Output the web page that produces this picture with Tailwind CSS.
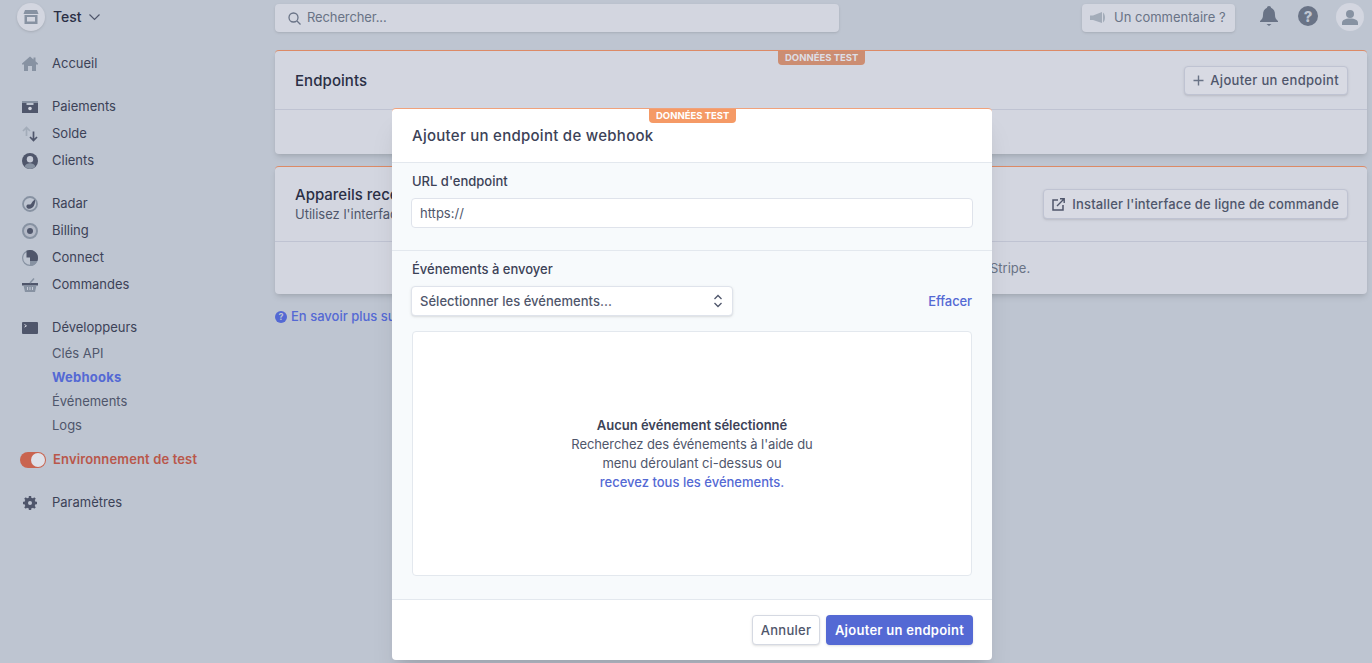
<!DOCTYPE html>
<html>
<head>
    <meta charset="UTF-8">
    <title>Webhooks - Stripe</title>
    <script src="https://cdn.jsdelivr.net/npm/@tailwindcss/browser@4"></script>
</head>
<body class="relative h-[663px] w-[1372px] overflow-hidden bg-[#bec5d1] font-['Inter',sans-serif] text-[13px] text-[#3c4257] antialiased">
    <div class="flex">
        <!-- Menu lateral -->
        <aside class="w-[275px] shrink-0 pl-[17px]">
            <div class="flex h-[34px] items-center">
                <div class="flex size-[28px] items-center justify-center rounded-full bg-[#d3d6e0] shadow-sm">
                    <svg width="16" height="16" viewBox="0 0 16 16"><path d="M2 1h12l1.500 4H.5z" fill="#8792a2"/><path d="M1.500 6h13v9h-13z" fill="#8792a2"/><path d="M4 8h8v4.500H4z" fill="#d3d6e0"/></svg>
                </div>
                <span class="ml-[8px] text-sm font-medium text-[#2a2f45]">Test</span>
                <svg class="ml-[7px]" width="11" height="8" viewBox="0 0 11 8"><path d="M.5 1.500l5 5 5-5" fill="none" stroke="#4f566b" stroke-width="1.200"/></svg>
            </div>

            <nav class="-ml-[17px] mt-[16.500px] pl-[22px]">
                <div class="flex h-[27px] items-center gap-[14px]">
                    <svg width="16" height="16" viewBox="0 0 16 16"><path d="M8 .5L0 7.500v1h2V15h4v-5h4v5h4V8.500h2v-1l-2.500-2.200V1.500h-2v2z" fill="#8792a2"/></svg>
                    <span>Accueil</span>
                </div>

                <div class="mt-[16px] flex h-[27px] items-center gap-[14px]">
                    <svg width="16" height="16" viewBox="0 0 16 16"><path d="M0 2h16v2H0z" fill="#8792a2"/><path d="M0 4h4.500V6h7V4H16v10H0z" fill="#4f566b"/><circle cx="8" cy="9.500" r="1.800" fill="#d3d6e0"/></svg>
                    <span>Paiements</span>
                </div>
                <div class="flex h-[27px] items-center gap-[14px]">
                    <svg width="16" height="16" viewBox="0 0 16 16"><path d="M4.500 10V1.500M1 5l3.500-3.500L8 5" fill="none" stroke="#a3acb9" stroke-width="1.700"/><path d="M11.500 5.500v9M8 11l3.500 3.500L15 11" fill="none" stroke="#4f566b" stroke-width="1.700"/></svg>
                    <span>Solde</span>
                </div>
                <div class="flex h-[27px] items-center gap-[14px]">
                    <svg width="16" height="16" viewBox="0 0 16 16"><circle cx="8" cy="8" r="8" fill="#4f566b"/><circle cx="8" cy="6.300" r="3.200" fill="#c5cad6"/><path d="M2.600 13.500c1-2.500 3-3.300 5.400-3.300s4.400.8 5.400 3.300A8 8 0 0 1 8 16a8 8 0 0 1-5.400-2.500z" fill="#8792a2"/></svg>
                    <span>Clients</span>
                </div>

                <div class="mt-[16px] flex h-[27px] items-center gap-[14px]">
                    <svg width="16" height="16" viewBox="0 0 16 16"><circle cx="8" cy="8" r="7" fill="none" stroke="#8792a2" stroke-width="1.800"/><path d="M13 3.500c.5 4.500-1.500 9-5.500 9.300C5 13 3.500 10.500 5 9c1-1 3 .2 4-1 1-1.500 2-3.500 4-4.500z" fill="#4f566b"/></svg>
                    <span>Radar</span>
                </div>
                <div class="flex h-[27px] items-center gap-[14px]">
                    <svg width="16" height="16" viewBox="0 0 16 16"><circle cx="8" cy="8" r="7" fill="#b4bac7" stroke="#8792a2" stroke-width="2"/><circle cx="8" cy="8" r="3" fill="#4f566b"/></svg>
                    <span>Billing</span>
                </div>
                <div class="flex h-[27px] items-center gap-[14px]">
                    <svg width="16" height="16" viewBox="0 0 16 16"><circle cx="8" cy="8" r="7.400" fill="none" stroke="#8792a2" stroke-width="1.200"/><path d="M4.500 .8A8 8 0 0 1 16 8a8 8 0 0 1-.6 3H8V7.500H4.500z" fill="#4f566b"/><path d="M8 11h7.400A8 8 0 0 1 8 16z" fill="#8792a2"/></svg>
                    <span>Connect</span>
                </div>
                <div class="flex h-[27px] items-center gap-[14px]">
                    <svg width="16" height="16" viewBox="0 0 16 16"><path d="M0 6h16v2.500H0z" fill="#4f566b"/><path d="M1.500 8.500h13L13 15H3z" fill="#8792a2"/><path d="M8 6l4-4.500" stroke="#8792a2" stroke-width="1.500"/><path d="M5.500 10v3M8 10v3M10.500 10v3" stroke="#c5cad6"/></svg>
                    <span>Commandes</span>
                </div>

                <div class="mt-[16px] flex h-[27px] items-center gap-[14px]">
                    <svg width="16" height="16" viewBox="0 0 16 16"><rect y="2" width="16" height="12" rx="1" fill="#4f566b"/><path d="M2.500 4.500l2 1.300-2 1.300" fill="none" stroke="#d3d6e0"/></svg>
                    <span>Développeurs</span>
                </div>
                <div class="ml-[30px] text-[#4f566b]">
                    <div class="flex h-[24px] items-center">Clés API</div>
                    <div class="flex h-[24px] items-center font-bold tracking-[.25px] text-[#5469d4]">Webhooks</div>
                    <div class="flex h-[24px] items-center">Événements</div>
                    <div class="flex h-[24px] items-center">Logs</div>
                </div>

                <div class="-ml-[2px] mt-[8.500px] flex h-[27px] items-center">
                    <div class="flex h-[16px] w-[26px] items-center justify-end rounded-full bg-[#c9644f] pr-[1px]">
                        <div class="size-[14px] rounded-full bg-[#dfe1e8]"></div>
                    </div>
                    <span class="ml-[7px] font-semibold tracking-[.14px] text-[#b9574a]">Environnement de test</span>
                </div>

                <div class="mt-[16px] flex h-[27px] items-center gap-[14px]">
                    <svg width="16" height="16" viewBox="0 0 16 16"><circle cx="8" cy="8" r="4.300" fill="none" stroke="#4f566b" stroke-width="2.600"/><path d="M8 1v14M1 8h14M3 3l10 10M13 3L3 13" stroke="#4f566b" stroke-width="2.400"/><circle cx="8" cy="8" r="2" fill="#bec5d1"/></svg>
                    <span>Paramètres</span>
                </div>
            </nav>
        </aside>

        <!-- Contenu -->
        <main class="w-[1092px]">
            <div class="flex h-[50px] items-start pt-[4px]">
                <div class="flex h-[28px] w-[564px] items-center gap-[6px] rounded bg-[#d3d6e0] pl-[13px] text-[#697386] shadow-sm">
                    <svg width="13" height="13" viewBox="0 0 13 13"><circle cx="5.500" cy="5.500" r="4.500" fill="none" stroke="#697386" stroke-width="1.300"/><path d="M9 9l3.500 3.500" stroke="#697386" stroke-width="1.300"/></svg>
                    <span class="tracking-[-.12px]">Rechercher...</span>
                </div>
                <div class="ml-[243px] flex h-[28px] w-[153px] items-center gap-[9px] rounded bg-[#d3d6e0] pl-[8px] text-[#697386] shadow-sm">
                    <svg width="15" height="12" viewBox="0 0 15 12"><path d="M0 3.500h3L12 0v11L3 8H0z" fill="#a3acb9"/><path d="M13 .5c1.300 1 2 3 2 5s-.7 4-2 5z" fill="#a3acb9"/></svg>
                    <span>Un commentaire ?</span>
                </div>
                <svg class="ml-[25px] mt-[2px]" width="18" height="21" viewBox="0 0 18 21"><path d="M9 0c1.200 0 2 .8 2 1.800C14 3 15 5.500 15 9c0 3 1 4.500 3 6v1H0v-1c2-1.500 3-3 3-6 0-3.500 1-6 4-7.200C7 .8 7.800 0 9 0z" fill="#697386"/><path d="M6.500 18h5L9 20z" fill="#697386"/></svg>
                <div class="ml-[20px] mt-[2px] flex size-[20px] items-center justify-center rounded-full bg-[#697386] text-[15px] font-extrabold leading-none text-[#bec5d1]">?</div>
                <div class="ml-[18px] -mt-[1px] flex size-[28px] items-center justify-center rounded-full bg-[#d3d6e0]">
                    <svg width="16" height="16" viewBox="0 0 16 16"><circle cx="8" cy="5" r="4" fill="#8792a2"/><path d="M0 16v-2c0-3 3-4.500 8-4.500s8 1.500 8 4.500v2z" fill="#8792a2"/></svg>
                </div>
            </div>

            <section class="relative h-[104px] rounded border-t border-[#dc8a66] bg-[#d3d6e0] shadow-md">
                <span class="absolute left-[503px] top-0 rounded-b-sm bg-[#cc8d72] px-[7px] text-[9.500px] font-bold leading-[14px] text-[#dedfe6]">DONNÉES TEST</span>
                <div class="flex h-[59px] items-center justify-between border-b border-[#bfc3d2] pl-[20px] pr-[19px]">
                    <h2 class="pt-[2px] text-[15px] font-medium tracking-[.07px] text-[#2a2f45]">Endpoints</h2>
                    <div class="flex h-[29px] items-center gap-[6px] rounded border border-[#bfc3d2] bg-[#d8dae3] px-[8px] font-medium tracking-[.32px] text-[#4f566b] shadow-sm">
                        <svg width="11" height="11" viewBox="0 0 11 11"><path d="M5.500 .5v10M.5 5.500h10" stroke="#697386" stroke-width="1.400"/></svg>
                        <span class="pt-[1px]">Ajouter un endpoint</span>
                    </div>
                </div>
            </section>

            <section class="mt-[12px] h-[128px] rounded border-t border-[#dc8a66] bg-[#d3d6e0] shadow-md">
                <div class="flex h-[75px] items-center justify-between border-b border-[#bfc3d2] pl-[20px] pr-[19px]">
                    <div>
                        <h2 class="text-[15px] font-medium leading-[20px] text-[#2a2f45]">Appareils recents</h2>
                        <p class="leading-[19px] text-[#4f566b]">Utilisez l'interface</p>
                    </div>
                    <div class="flex h-[30px] items-center gap-[7px] rounded border border-[#bfc3d2] bg-[#d8dae3] px-[8px] font-medium tracking-[.15px] text-[#4f566b] shadow-sm">
                        <svg width="13" height="13" viewBox="0 0 13 13"><path d="M6 2H1v10h10V7" fill="none" stroke="#4f566b" stroke-width="1.500"/><path d="M5 8l7-7M8 .8h4.200V5" fill="none" stroke="#4f566b" stroke-width="1.400"/></svg>
                        <span class="pt-[1px]">Installer l'interface de ligne de commande</span>
                    </div>
                </div>
                <p class="mt-[17px] pl-[715px] text-[#697386]">Stripe.</p>
            </section>

            <div class="mt-[13px] flex items-center gap-[4px] font-medium text-[#5469d4]">
                <div class="flex size-[12px] items-center justify-center rounded-full bg-[#5469d4] text-[9px] font-bold leading-none text-[#bec5d1]">?</div>
                <span>En savoir plus sur les webhooks</span>
            </div>
        </main>
    </div>

    <!-- Fenetre modale -->
    <div class="absolute left-[392px] top-[108px] flex h-[552px] w-[600px] flex-col overflow-hidden rounded border-t border-[#f0a27c] bg-white shadow-xl">
        <span class="absolute left-[257px] top-0 rounded-b-sm bg-[#f59a66] px-[7px] text-[9.500px] font-bold leading-[14px] text-white">DONNÉES TEST</span>
        <div class="flex h-[54px] shrink-0 items-center border-b border-[#e3e8ee] pl-[20px] pt-[1px]">
            <h1 class="text-[15px] font-medium tracking-[.27px] text-[#3c4257]">Ajouter un endpoint de webhook</h1>
        </div>

        <div class="flex-1 bg-[#f7fafc]">
            <div class="h-[88px] border-b border-[#e3e8ee] px-[19px]">
                <label class="ml-px block pt-[9px] font-medium leading-[18px]">URL d'endpoint</label>
                <div class="mt-[8px] flex h-[30px] items-center rounded border border-[#dfe3eb] bg-white pl-[8px] pt-[1px] text-[#4f566b]">https://</div>
            </div>

            <div class="px-[19px]">
                <label class="ml-px block pt-[9px] font-medium leading-[18px]">Événements à envoyer</label>
                <div class="mt-[8px] flex items-center justify-between">
                    <div class="flex h-[30px] w-[322px] items-center justify-between rounded border border-[#dfe3eb] bg-white pl-[8px] pr-[9px] font-medium text-[#4f566b] shadow-sm">
                        <span class="pt-[1px] tracking-[.03px]">Sélectionner les événements...</span>
                        <svg width="10" height="14" viewBox="0 0 10 14"><path d="M1.500 5L5 1.500 8.500 5M1.500 9L5 12.500 8.500 9" fill="none" stroke="#4f566b" stroke-width="1.300"/></svg>
                    </div>
                    <span class="mr-px pt-[1px] font-medium tracking-[-.1px] text-[#5469d4]">Effacer</span>
                </div>
                <div class="ml-px mt-[15px] flex h-[245px] w-[560px] items-center justify-center rounded border border-[#e3e8ee] bg-white text-center leading-[19px] text-[#4f566b]">
                    <div>
                        <p class="font-semibold text-[#3c4257]">Aucun événement sélectionné</p>
                        <p class="tracking-[-.08px]">Recherchez des événements à l'aide du</p>
                        <p>menu déroulant ci-dessus ou</p>
                        <p class="font-medium text-[#5469d4]">recevez tous les événements.</p>
                    </div>
                </div>
            </div>
        </div>

        <div class="flex h-[61px] shrink-0 items-center justify-end gap-[6px] border-t border-[#e3e8ee] pr-[19px]">
            <div class="flex h-[30px] w-[68px] items-center justify-center rounded border border-[#d5d9e2] bg-white pt-[1px] font-medium tracking-[.25px] text-[#4f566b] shadow-sm">Annuler</div>
            <div class="flex h-[30px] w-[147px] items-center justify-center rounded bg-[#5469d4] pt-[1px] font-semibold tracking-[.26px] text-white shadow-sm">Ajouter un endpoint</div>
        </div>
    </div>
</body>
</html>
